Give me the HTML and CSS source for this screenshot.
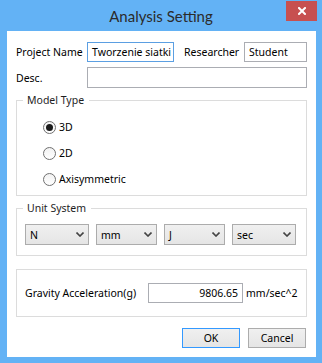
FILE: index.html
```html
<!DOCTYPE html>
<html lang="en">
<head>
  <meta charset="UTF-8">
  <title>Analysis Setting</title>
  <link rel="stylesheet" href="styles.css">
</head>
<body>
  <div class="window">
    <div class="titlebar">
      <span class="title">Analysis Setting</span>
      <button class="close-btn" aria-label="Close">
        <svg width="8" height="8" viewBox="0 0 8 8"><path d="M1 1 L7 7 M7 1 L1 7" stroke="#fff" stroke-width="2" stroke-linecap="square"/></svg>
      </button>
    </div>

    <div class="client">
      <div class="row">
        <label class="lbl lbl-project">Project Name</label>
        <div class="textbox focused tb-project">Tworzenie siatki</div>
        <label class="lbl lbl-researcher">Researcher</label>
        <div class="textbox tb-researcher">Student</div>
      </div>
      <div class="row row-desc">
        <label class="lbl lbl-project">Desc.</label>
        <div class="textbox tb-desc"></div>
      </div>

      <fieldset class="group group-model">
        <legend>Model Type</legend>
        <div class="radio-list">
          <div class="radio-row"><span class="radio checked"></span><span>3D</span></div>
          <div class="radio-row"><span class="radio"></span><span>2D</span></div>
          <div class="radio-row"><span class="radio"></span><span>Axisymmetric</span></div>
        </div>
      </fieldset>

      <fieldset class="group group-unit">
        <legend>Unit System</legend>
        <div class="unit-grid">
          <div class="combo"><span>N</span><svg width="8" height="5" viewBox="0 0 8 5"><path d="M0.5 0.5 L4 4 L7.5 0.5" fill="none" stroke="#444" stroke-width="1.6"/></svg></div>
          <div class="combo"><span>mm</span><svg width="8" height="5" viewBox="0 0 8 5"><path d="M0.5 0.5 L4 4 L7.5 0.5" fill="none" stroke="#444" stroke-width="1.6"/></svg></div>
          <div class="combo"><span>J</span><svg width="8" height="5" viewBox="0 0 8 5"><path d="M0.5 0.5 L4 4 L7.5 0.5" fill="none" stroke="#444" stroke-width="1.6"/></svg></div>
          <div class="combo"><span>sec</span><svg width="8" height="5" viewBox="0 0 8 5"><path d="M0.5 0.5 L4 4 L7.5 0.5" fill="none" stroke="#444" stroke-width="1.6"/></svg></div>
        </div>
      </fieldset>

      <div class="gravity-box">
        <label class="lbl lbl-gravity">Gravity Acceleration(g)</label>
        <div class="textbox tb-gravity">9806.65</div>
        <span class="unit-text">mm/sec^2</span>
      </div>

      <div class="buttons">
        <button class="btn btn-ok">OK</button>
        <button class="btn">Cancel</button>
      </div>
    </div>
  </div>
</body>
</html>
```

FILE: styles.css
```css
html, body {
  margin: 0;
  padding: 0;
}
body {
  font-family: 'Noto Sans', 'Open Sans', sans-serif;
  font-size: 10.5px;
  color: #000;
  background-color: #63b2f5;
}
.window {
  width: 322px;
  height: 363px;
  background-color: #63b2f5;
  display: flex;
  flex-direction: column;
  box-sizing: border-box;
}
.titlebar {
  height: 31px;
  flex: none;
  display: flex;
  align-items: center;
  justify-content: center;
  position: relative;
}
.title {
  font-family: 'Lato', 'Noto Sans', sans-serif;
  font-size: 15px;
  color: #2b2b2b;
}
.close-btn {
  position: absolute;
  top: 1px;
  right: 5px;
  width: 31px;
  height: 20px;
  border: none;
  padding: 0;
  background-color: #c75050;
  display: flex;
  align-items: center;
  justify-content: center;
}
.client {
  flex: 1;
  background-color: #fff;
  margin: 0 6px 6px 7px;
  padding: 11px 9px 0 9px;
}
.row {
  display: flex;
  align-items: center;
  height: 20px;
}
.row-desc {
  margin-top: 5px;
  height: 21px;
}
.lbl {
  white-space: nowrap;
}
.lbl-project {
  width: 71px;
  flex: none;
}
.lbl-researcher {
  width: 60px;
  margin-left: 10px;
  flex: none;
}
.textbox {
  box-sizing: border-box;
  border: 1px solid #abadb3;
  height: 20px;
  line-height: 18px;
  padding: 0 4px;
  white-space: nowrap;
  overflow: hidden;
}
.textbox.focused {
  border-color: #5b9fe2;
}
.tb-project {
  width: 87px;
}
.tb-researcher {
  width: 63px;
}
.tb-desc {
  flex: 1;
  height: 21px;
}
.group {
  border: 1px solid #dcdcdc;
  margin: 0;
  padding: 0;
}
.group legend {
  line-height: 16px;
  padding: 0 5px 0 4px;
  margin-left: 6px;
  color: #1e1e1e;
}
.group-model {
  margin-top: 4px;
}
.radio-list {
  padding: 6px 0 3px 26px;
}
.radio-row {
  display: flex;
  align-items: center;
  height: 26px;
}
.radio {
  box-sizing: border-box;
  width: 13px;
  height: 13px;
  border: 1px solid #707070;
  border-radius: 50%;
  background: linear-gradient(#f2f2f2, #ffffff);
  margin-right: 3px;
  display: flex;
  align-items: center;
  justify-content: center;
}
.radio.checked::after {
  content: "";
  width: 7px;
  height: 7px;
  border-radius: 50%;
  background-color: #1a1a1a;
}
.group-unit {
  margin-top: 4px;
}
.unit-grid {
  display: grid;
  grid-template-columns: 64px 61px 61px 64px;
  column-gap: 7px;
  padding: 8px 10px 10px 8px;
}
.combo {
  box-sizing: border-box;
  height: 21px;
  border: 1px solid #acacac;
  background: linear-gradient(#f0f0f0, #e5e5e5);
  display: flex;
  align-items: center;
  justify-content: space-between;
  padding: 0 4px 0 4px;
}
.gravity-box {
  margin-top: 13px;
  border: 1px solid #dcdcdc;
  height: 48px;
  box-sizing: border-box;
  padding: 0 0 0 8px;
  display: flex;
  align-items: center;
}
.lbl-gravity {
  width: 123px;
  flex: none;
}
.tb-gravity {
  width: 95px;
  text-align: right;
}
.unit-text {
  margin-left: 3px;
}
.buttons {
  display: flex;
  justify-content: flex-end;
  gap: 8px;
  margin-top: 11px;
  padding-right: 1px;
}
.btn {
  box-sizing: border-box;
  width: 58px;
  height: 20px;
  border: 1px solid #acacac;
  background: linear-gradient(#f0f0f0, #e5e5e5);
  font-family: inherit;
  font-size: 10.5px;
  color: #000;
  padding: 0;
}
.btn-ok {
  border-color: #3399ff;
}
```
